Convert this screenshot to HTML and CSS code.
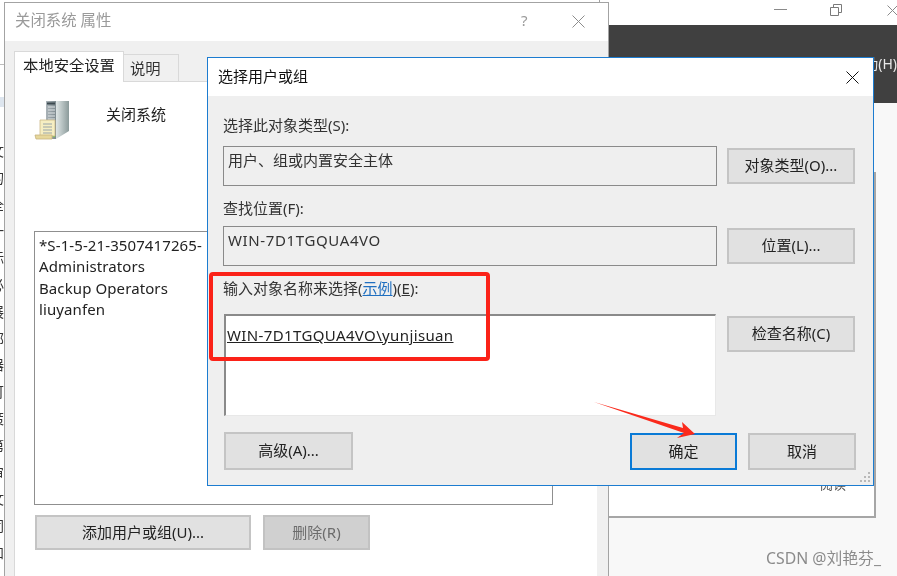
FILE: index.html
```html
<!DOCTYPE html>
<html lang="zh-CN">
<head>
<meta charset="utf-8">
<title>选择用户或组</title>
<link rel="stylesheet" href="styles.css">
</head>
<body>
<div class="desktop">
  <!-- window behind, left sliver -->
  <div class="sliver">
    <div class="sliver-rule-a"></div>
    <div class="sliver-rule-b"></div>
    <div class="sliver-text">
      <span>文</span><span>的</span><span>全</span><span>一</span><span>标</span><span>必</span><span>展</span><span>部</span><span>器</span><span>可</span><span>策</span><span>第</span><span>审</span><span>文</span><span>同</span><span>和</span>
    </div>
  </div>

  <!-- window behind, right -->
  <div class="backwin">
    <div class="back-title">
      <svg class="ctl ctl-min" width="13" height="3" viewBox="0 0 13 3"><path d="M0 1.5H13" stroke="#8a8a8a"/></svg>
      <svg class="ctl ctl-max" width="12" height="12" viewBox="0 0 12 12" fill="none" stroke="#7a7a7a"><path d="M.5 3.5h8v8h-8zM3.5 3.5v-3h8v8h-3"/></svg>
      <svg class="ctl ctl-cls" width="11" height="11" viewBox="0 0 11 11" stroke="#8a8a8a"><path d="M.5.5l14 14M.5 10.500l14-14"/></svg>
    </div>
    <div class="back-band"><span class="back-menu">帮助(H)</span></div>
    <div class="back-body">
      <div class="back-panel"><span class="back-tiny">阅读</span></div>
    </div>
  </div>

  <!-- properties window -->
  <div class="props">
    <div class="props-title">
      <span class="props-name">关闭系统 属性</span>
      <span class="props-help">?</span>
      <svg class="props-x" width="13" height="13" viewBox="0 0 13 13" stroke="#8c8c8c"><path d="M.5.5l12 12M12.5.5l-12 12"/></svg>
    </div>
    <div class="props-body">
      <div class="tabs">
        <div class="tab tab-on">本地安全设置</div>
        <div class="tab tab-off">说明</div>
      </div>
      <div class="tabpanel">
        <div class="policy">
          <svg class="server" width="38" height="42" viewBox="0 0 38 42">
            <defs>
              <linearGradient id="srvFront" x1="0" x2="1" y1="0" y2="0"><stop offset="0" stop-color="#aab3b8"/><stop offset="1" stop-color="#7f8b90"/></linearGradient>
              <linearGradient id="srvSide" x1="0" x2="1" y1="0" y2="0"><stop offset="0" stop-color="#dfe6e6"/><stop offset="1" stop-color="#8b9a9a"/></linearGradient>
            </defs>
            <path d="M13 1h10v38H13z" fill="url(#srvFront)"/>
            <path d="M23 1h13v30l-13 8z" fill="url(#srvSide)"/>
            <path d="M14 2.500h8v2h-8z" fill="#3d4a50"/>
            <path d="M15 7h7M15 10h7M15 13h7M15 16h7M15 19h7" stroke="#dfe4e6"/>
            <circle cx="21" cy="36" r="1.200" fill="#6fd044"/>
            <path d="M7 20h15v16H7z" fill="#f6eec2" stroke="#cdb988" stroke-width=".8"/>
            <path d="M2 35h17v4H3z" fill="#e6d79b" stroke="#c6b27e" stroke-width=".8"/>
            <path d="M10 24h9M10 27h9M10 30h9M10 33h9" stroke="#98a4a8"/>
          </svg>
          <span class="policy-name">关闭系统</span>
        </div>
        <ul class="members">
          <li>*S-1-5-21-3507417265-</li>
          <li>Administrators</li>
          <li>Backup Operators</li>
          <li>liuyanfen</li>
        </ul>
        <div class="member-actions">
          <button class="btn btn-add" type="button">添加用户或组(U)...</button>
          <button class="btn btn-del" type="button">删除(R)</button>
        </div>
      </div>
    </div>
  </div>

  <!-- select users dialog -->
  <div class="dialog">
    <div class="dlg-title">
      <span>选择用户或组</span>
      <svg class="dlg-x" width="13" height="13" viewBox="0 0 13 13" stroke="#111"><path d="M.5.5l12 12M12.500.5l-12 12"/></svg>
    </div>
    <div class="dlg-body">
      <div class="dlg-grid">
        <label class="lbl lbl-1">选择此对象类型(S):</label>
        <div class="box">用户、组或内置安全主体</div>
        <button class="btn btn-side" type="button">对象类型(O)...</button>

        <label class="lbl lbl-2">查找位置(F):</label>
        <div class="box box-latin">WIN-7D1TGQUA4VO</div>
        <button class="btn btn-side" type="button">位置(L)...</button>

        <label class="lbl lbl-3">输入对象名称来选择(<a class="link">示例</a>)(<u>E</u>):</label>
        <div class="names"><u>WIN-7D1TGQUA4VO\yunjisuan</u></div>
        <button class="btn btn-side" type="button">检查名称(C)</button>
      </div>
      <div class="dlg-actions">
        <button class="btn btn-adv" type="button">高级(A)...</button>
        <button class="btn btn-ok" type="button">确定</button>
        <button class="btn btn-cancel" type="button">取消</button>
      </div>
      <svg class="grip" width="11" height="11" viewBox="0 0 11 11" fill="#b8b8b8"><path d="M8 0h2v2H8zM4 4h2v2H4zM8 4h2v2H8zM0 8h2v2H0zM4 8h2v2H4zM8 8h2v2H8z"/></svg>
    </div>
  </div>

  <!-- annotations -->
  <div class="mark"></div>
  <svg class="arrow" width="110" height="45" viewBox="0 0 110 45"><path d="M4 2L93 28 92 22 105 34 87 38 94 33z" fill="#fa2a1c"/></svg>
  <span class="watermark">CSDN @刘艳芬_</span>
</div>
</body>
</html>
```

FILE: styles.css
```css
* { box-sizing: border-box; }
html, body { margin: 0; padding: 0; }
body {
  font-family: "Noto Sans", "Noto Sans CJK SC", sans-serif;
  font-size: 14px;
  color: #222;
  background: #fff;
}
.desktop {
  position: relative;
  width: 897px;
  height: 576px;
  overflow: hidden;
  background: #fff;
  filter: blur(.3px);
}

/* left sliver */
.sliver { position: absolute; left: 0; top: 0; width: 5px; height: 576px; overflow: hidden; background: #fff; }
.sliver-rule-a { position: absolute; left: 0; top: 64px; width: 5px; height: 1px; background: #bdbdbd; }
.sliver-rule-b { position: absolute; left: 0; top: 97px; width: 5px; height: 10px; background: #dde5ee; }
.sliver-text { display: flex; flex-direction: column; margin: 138px 0 0 -10px; font-size: 14px; line-height: 26.800px; color: #333; }
.sliver-text span { display: block; height: 26.800px; }

/* right back window */
.backwin { position: absolute; left: 599px; top: 0; width: 298px; height: 576px; display: flex; flex-direction: column; background: #f8f8f8; border-left: 1px solid #a0a0a0; }
.back-title { position: relative; height: 25px; background: #fff; flex: none; }
.ctl { position: absolute; overflow: hidden; }
.ctl-min { left: 174px; top: 8px; }
.ctl-max { left: 230px; top: 4px; }
.ctl-cls { left: 287px; top: 5px; }
.back-band { position: relative; height: 78px; background: #404040; flex: none; }
.back-menu { position: absolute; right: 0; top: 29px; color: #e8e8e8; font-size: 14px; line-height: 20px; }
.back-body { flex: 1; padding: 69px 21px 0 9px; }
.back-panel { position: relative; height: 346px; background: #fff; border: 1px solid #a6a6a6; border-width: 0 2px 2px 0; }
.back-tiny { position: absolute; left: 211px; top: 304px; font-size: 13px; line-height: 16px; color: #555; }

/* properties window */
.props { position: absolute; left: 4px; top: 2px; width: 605px; height: 620px; background: #f0f0f0; border: 1px solid #a3a3a3; display: flex; flex-direction: column; }
.props-title { position: relative; height: 38px; flex: none; background: #fff; padding-left: 10px; line-height: 35px; font-size: 15.400px; color: #9a9a9a; }
.props-name { display: block; }
.props-help { position: absolute; left: 516px; top: 0; font-size: 15px; color: #9a9a9a; }
.props-x { position: absolute; left: 567px; top: 12px; }
.props-body { flex: 1; padding: 11px 11px 0 9px; display: flex; flex-direction: column; }
.tabs { display: flex; align-items: flex-end; height: 30px; flex: none; margin-bottom: -1px; position: relative; z-index: 1; }
.tab { border: 1px solid #d9d9d9; font-size: 15.300px; }
.tab-on { width: 110px; height: 31px; background: #fff; border-bottom: 0; line-height: 27px; color: #222; text-align: center; }
.tab-off { width: 55px; height: 28px; border-left: 0; padding-left: 6px; line-height: 27px; background: #f0f0f0; color: #333; }
.tabpanel { flex: 1; background: #fff; border-top: 1px solid #d9d9d9; border-left: 1px solid #d9d9d9; padding: 0 0 0 19px; }
.policy { height: 149px; display: flex; align-items: flex-start; padding-top: 18px; }
.server { margin-left: -1px; flex: none; }
.policy-name { margin-left: 35px; font-size: 15px; line-height: 20px; margin-top: 4px; color: #222; }
.members { margin: 0; padding: 3px 4px; list-style: none; width: 519px; height: 274px; background: #fff; border: 1px solid #8f8f8f; font-size: 15px; letter-spacing: .1px; line-height: 21.400px; color: #222; white-space: nowrap; overflow: hidden; }
.member-actions { display: flex; gap: 12px; margin-top: 10px; padding-left: 1px; }

/* buttons */
.btn { display: block; margin: 0; padding: 0 0 3px; font: inherit; font-size: 15px; color: #222; background: #e1e1e1; border: 2px solid #c4c4c4; text-align: center; }
.btn-add { width: 216px; height: 35px; padding-bottom: 2px; }
.btn-del { width: 107px; height: 35px; padding-bottom: 2px; background: #d0d0d0; color: #6c6c6c; border-color: #c2c2c2; }

/* dialog */
.dialog { position: absolute; left: 207px; top: 57px; width: 667px; height: 429px; background: #efefef; border: 1px solid #1c7cd0; display: flex; flex-direction: column; }
.dlg-title { position: relative; height: 38px; flex: none; background: #fff; border-bottom: 1px solid #fff; padding-left: 10px; font-size: 15px; line-height: 36px; color: #111; }
.dlg-x { position: absolute; left: 638px; top: 13px; }
.dlg-body { position: relative; flex: 1; padding: 19px 17px 0 15px; }
.dlg-grid { display: grid; grid-template-columns: 494px 128px; column-gap: 10px; align-items: start; }
.lbl { grid-column: 1 / 3; font-size: 15px; line-height: 20px; color: #333; }
.lbl-1 { margin-bottom: 11px; }
.lbl-2 { margin: 12px 0 8px; }
.lbl-3 { margin: 12px 0 16px; }
.link { color: #1f6fc0; text-decoration: underline; }
.box { height: 40px; padding: 3px 4px; border: 1.500px solid #8a8a8a; background: #efefef; font-size: 15px; line-height: 21px; color: #333; }
.box-latin { letter-spacing: .62px; }
.btn-side { height: 36px; margin-top: 2px; }
.names { height: 102px; margin-left: 1px; width: 492px; padding: 8px 1px; background: #fff; border-style: solid; border-width: 2px 1px 1px 2px; border-color: #8a8a8a #e8e8e8 #e8e8e8 #8a8a8a; font-size: 15px; letter-spacing: .37px; line-height: 22px; color: #222; white-space: nowrap; }
.dlg-actions { display: flex; align-items: flex-start; margin: 16px 0 0 1px; }
.btn-adv { width: 129px; height: 38px; }
.btn-ok { width: 107px; height: 37px; margin-left: auto; margin-top: 1px; border-color: #0a7ad6; }
.btn-cancel { width: 108px; height: 37px; margin-left: 11px; margin-top: 1px; }
.grip { position: absolute; right: 2px; bottom: 2px; }

/* annotations */
.mark { position: absolute; left: 209px; top: 272px; width: 281px; height: 89px; border: 4px solid #fb2218; border-radius: 4px; }
.arrow { position: absolute; left: 590px; top: 400px; }
.watermark { position: absolute; left: 766px; top: 548px; font-size: 15.800px; line-height: 20px; color: #8b8b8b; white-space: nowrap; }
```
